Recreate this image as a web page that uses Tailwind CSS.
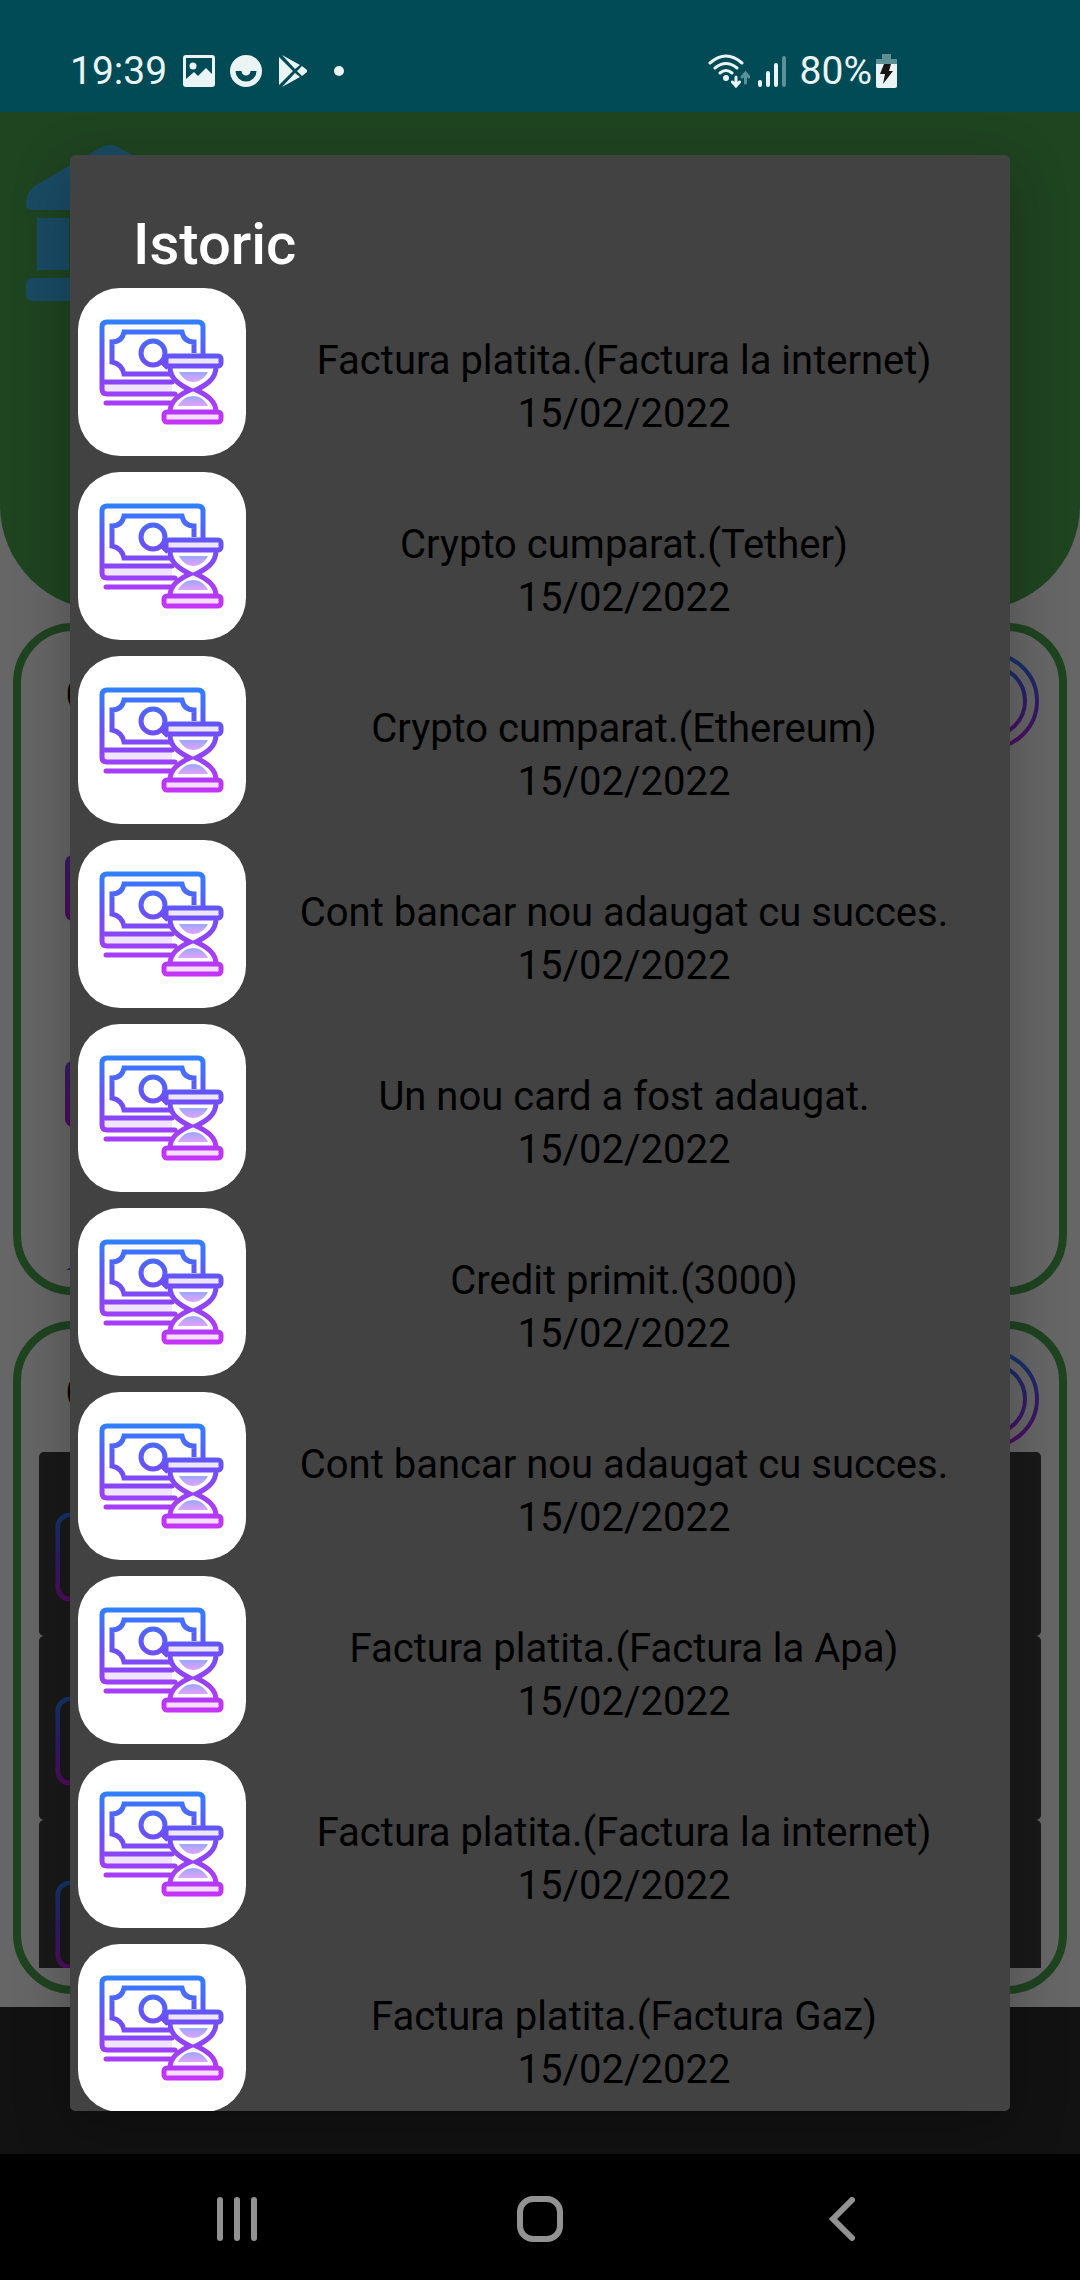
<!DOCTYPE html>
<html lang="ro">
<head>
<meta charset="utf-8">
<meta name="viewport" content="width=device-width, initial-scale=1">
<title>Istoric</title>
<script src="https://cdn.jsdelivr.net/npm/@tailwindcss/browser@4"></script>
</head>
<body class="h-screen flex flex-col overflow-hidden bg-black font-['Roboto',sans-serif]">

<svg class="absolute w-0 h-0" aria-hidden="true">
  <defs>
    <linearGradient id="vivid" gradientUnits="userSpaceOnUse" x1="0" y1="32" x2="0" y2="136">
      <stop offset="0" stop-color="#2f80ff"/><stop offset=".4" stop-color="#6a50f6"/><stop offset="1" stop-color="#c832f8"/>
    </linearGradient>
    <linearGradient id="sand" x1="0" y1="0" x2="0" y2="1">
      <stop offset="0" stop-color="#9aa8fb"/><stop offset="1" stop-color="#e2a2fa"/>
    </linearGradient>
    <linearGradient id="dim" gradientUnits="userSpaceOnUse" x1="0" y1="0" x2="0" y2="100">
      <stop offset="0" stop-color="#12366a"/><stop offset=".5" stop-color="#2f1d66"/><stop offset="1" stop-color="#520a60"/>
    </linearGradient>
    <linearGradient id="plum" x1="0" y1="0" x2="0" y2="1">
      <stop offset="0" stop-color="#351b60"/><stop offset="1" stop-color="#4c0b5e"/>
    </linearGradient>
    <symbol id="bill" viewBox="0 0 168 168">
      <path d="M24 94h70v12H24z" fill="#f1e4fe"/>
      <g fill="none" stroke="url(#vivid)" stroke-width="5">
        <path d="M125 65V39q0-5-5-5H29q-5 0-5 5v62q0 5 5 5h68M24 94h70M28 115h64" stroke-linecap="round"/>
        <path d="M116 65V54q-10 0-12-10H46q-2 10-12 10v20q10 2 12 12h46"/>
        <circle cx="75" cy="65" r="12"/>
        <path d="M84 74l6 6M92 79c0 12 10 18 20 23c-11 5-20 11-20 22M138 79c0 12-10 18-20 23c11 5 20 11 20 22"/>
        <rect x="88" y="68" width="55" height="10" rx="3" fill="#efe6fe"/>
        <rect x="86" y="124" width="57" height="10" rx="3" fill="#f6defe"/>
      </g>
      <path d="M101 84h29c-3 6-9 10-15 10s-11-4-14-10z" fill="url(#sand)"/>
      <path d="M100 118c3-6 8-10 15-10s12 4 15 10z" fill="url(#sand)"/>
    </symbol>
  </defs>
</svg>

<header class="h-[112px] shrink-0 bg-[#004b55] text-[#eaf4f4] flex items-start justify-between pt-12 pl-[70px] pr-[183px]">
  <div class="flex items-center h-[46px]">
    <time class="text-[39px] leading-[46px] w-[113px]">19:39</time>
    <svg class="w-8 h-8 mr-[15px]" viewBox="0 0 32 32" fill="currentColor"><path fill-rule="evenodd" d="M3 0h26a3 3 0 0 1 3 3v26a3 3 0 0 1-3 3H3a3 3 0 0 1-3-3V3a3 3 0 0 1 3-3zM3 3v21l8-7 4 4 8-8 6 6V3z"/><circle cx="10" cy="11" r="3.5"/></svg>
    <svg class="w-8 h-8 mr-[15px]" viewBox="0 0 32 32"><circle cx="16" cy="16" r="16" fill="currentColor"/><path d="M5.500 16h6a4.500 4.500 0 0 0 9 0h6a10.500 10.500 0 0 1-21 0z" fill="#004b55"/></svg>
    <svg class="w-8 h-8 mr-[25px]" viewBox="0 0 32 32" fill="currentColor"><path d="M2 2v28l14-14zM5 0l13 14 5-4zM5 32l13-14 5 4zM20 16l5-5 5 4v2l-5 4z"/></svg>
    <span class="w-[10px] h-[10px] rounded-full bg-current"></span>
  </div>
  <div class="flex items-center h-[46px]">
    <svg class="w-[42px] h-[34px] mr-2" viewBox="0 0 42 34" fill="none" stroke="currentColor" stroke-width="3" stroke-linecap="round"><path d="M2 9q16-14 32 0M7 14q11-9 22 0M12 19q6-5 12 0"/><circle cx="18" cy="24" r="1.500"/><path d="M28 23v8M24.500 28l3.500 4 3.500-4"/><path d="M37.500 29v-9M34 23l3.500-4 3.500 4" stroke="#5c9096"/></svg>
    <svg class="w-7 h-8 mr-[14px]" viewBox="0 0 28 32" stroke="currentColor" stroke-width="4" stroke-linecap="round"><path d="M2 27v3M10 18v12M18 10v20"/><path d="M26 3v27" stroke="#5c9096"/></svg>
    <span class="text-[39px] leading-[46px] mr-1">80%</span>
    <svg class="w-[21px] h-[34px]" viewBox="0 0 21 34"><path d="M6 0h9v5h6v6H0V5h6z" fill="#5c9096"/><path d="M0 10h21v22q0 2-2 2H2q-2 0-2-2z" fill="currentColor"/><path d="M8 10h7l-2 7h4L7 30l2-10H4z" fill="#161616"/></svg>
  </div>
</header>

<main class="relative flex-1 min-h-0 flex flex-col bg-[#666] overflow-hidden">
  <section class="h-[498px] shrink-0 bg-[#1f4420] rounded-b-[105px] pt-[33px] pl-[26px]">
    <svg class="w-[168px] h-[156px]" viewBox="0 0 168 156" fill="#194b64"><path d="M0 59q0-14 12-20L74 3q10-6 20 0l62 36q12 6 12 20 0 6-7 6H7q-7 0-7-6zM11 73h32v52H11zM68 73h32v52H68zM125 73h32v52h-32zM7 133h154q7 0 7 7v9q0 7-7 7H7q-7 0-7-7v-9q0-7 7-7z"/></svg>
  </section>

  <section class="mx-[13px] mt-[13px] h-[672px] shrink-0 border-8 border-[#1f4420] rounded-[60px]">
    <div class="flex justify-between pl-11 pr-5 pt-[21px]">
      <span class="text-[48px] leading-[86px]">C</span>
      <svg class="w-[98px] h-[98px]" viewBox="0 0 98 98" fill="none" stroke="url(#dim)" stroke-width="4"><circle cx="49" cy="49" r="47"/><circle cx="49" cy="49" r="35"/></svg>
    </div>
    <div class="mt-[105px] h-[415px] overflow-hidden flex flex-col gap-[140px] pl-11">
      <svg class="w-[66px] h-[66px] shrink-0" viewBox="0 0 66 66"><rect width="66" height="66" rx="8" fill="url(#plum)"/></svg>
      <svg class="w-[66px] h-[66px] shrink-0" viewBox="0 0 66 66"><rect width="66" height="66" rx="8" fill="url(#plum)"/></svg>
      <svg class="w-[66px] h-[66px] shrink-0" viewBox="0 0 66 66"><rect width="66" height="66" rx="8" fill="url(#plum)"/></svg>
    </div>
  </section>

  <section class="mx-[13px] mt-[26px] h-[673px] shrink-0 border-8 border-[#1f4420] rounded-[60px]">
    <div class="flex justify-between h-[123px] pl-11 pr-5 pt-[21px]">
      <span class="text-[48px] leading-[86px]">C</span>
      <svg class="w-[98px] h-[98px]" viewBox="0 0 98 98" fill="none" stroke="url(#dim)" stroke-width="4"><circle cx="49" cy="49" r="47"/><circle cx="49" cy="49" r="35"/></svg>
    </div>
    <div class="mx-[18px] h-[516px] overflow-hidden">
      <div class="h-[184px] rounded-[5px] bg-[#191919] pl-4 pt-[60px]"><svg class="w-[90px] h-[90px]" viewBox="0 0 100 100" fill="none" stroke="url(#dim)" stroke-width="5"><rect x="3" y="3" width="94" height="94" rx="14"/></svg></div>
      <div class="h-[184px] rounded-[5px] bg-[#191919] pl-4 pt-[60px]"><svg class="w-[90px] h-[90px]" viewBox="0 0 100 100" fill="none" stroke="url(#dim)" stroke-width="5"><rect x="3" y="3" width="94" height="94" rx="14"/></svg></div>
      <div class="h-[184px] rounded-[5px] bg-[#191919] pl-4 pt-[60px]"><svg class="w-[90px] h-[90px]" viewBox="0 0 100 100" fill="none" stroke="url(#dim)" stroke-width="5"><rect x="3" y="3" width="94" height="94" rx="14"/></svg></div>
    </div>
  </section>
  <div class="mt-[13px] flex-1 bg-[#121212]"></div>

  <div role="dialog" aria-labelledby="title" class="absolute inset-x-[70px] inset-y-[43px] overflow-hidden rounded-[5px] bg-[#424242] text-black shadow-[0_16px_56px_rgba(0,0,0,0.25)]">
    <h1 id="title" class="h-[125px] pt-[55px] pl-[63px] text-[58px] leading-[68px] font-medium text-white">Istoric</h1>
    <ul id="history"></ul>
  </div>
</main>

<nav class="h-[126px] shrink-0 bg-black text-[#929292] grid grid-cols-[1fr_148px_1fr] items-center pt-[3px]">
  <button aria-label="Recente" class="justify-self-end mr-[209px]"><svg class="w-10 h-11" viewBox="0 0 40 44" stroke="currentColor" stroke-width="6" stroke-linecap="round"><path d="M3 3v38M20 3v38M37 3v38"/></svg></button>
  <button aria-label="Acasa" class="justify-self-center"><svg class="w-[46px] h-[46px]" viewBox="0 0 46 46" fill="none" stroke="currentColor" stroke-width="6"><rect x="3" y="3" width="40" height="40" rx="13"/></svg></button>
  <button aria-label="Inapoi" class="justify-self-start ml-[215px]"><svg class="w-[26px] h-11" viewBox="0 0 26 44" fill="none" stroke="currentColor" stroke-width="6" stroke-linecap="round"><path d="M23 3L4 22l19 19"/></svg></button>
</nav>

<script>
const entries = [
  "Factura platita.(Factura la internet)",
  "Crypto cumparat.(Tether)",
  "Crypto cumparat.(Ethereum)",
  "Cont bancar nou adaugat cu succes.",
  "Un nou card a fost adaugat.",
  "Credit primit.(3000)",
  "Cont bancar nou adaugat cu succes.",
  "Factura platita.(Factura la Apa)",
  "Factura platita.(Factura la internet)",
  "Factura platita.(Factura Gaz)"
];
document.getElementById("history").innerHTML = entries.map(text => `
  <li class="flex h-[184px] p-2">
    <span class="w-[168px] h-[168px] shrink-0 rounded-[42px] bg-white"><svg class="w-full h-full"><use href="#bill"/></svg></span>
    <div class="flex-1 pt-[46px] text-center text-[40px] leading-[53px]"><p>${text}</p><p>15/02/2022</p></div>
  </li>`).join("");
</script>
</body>
</html>
